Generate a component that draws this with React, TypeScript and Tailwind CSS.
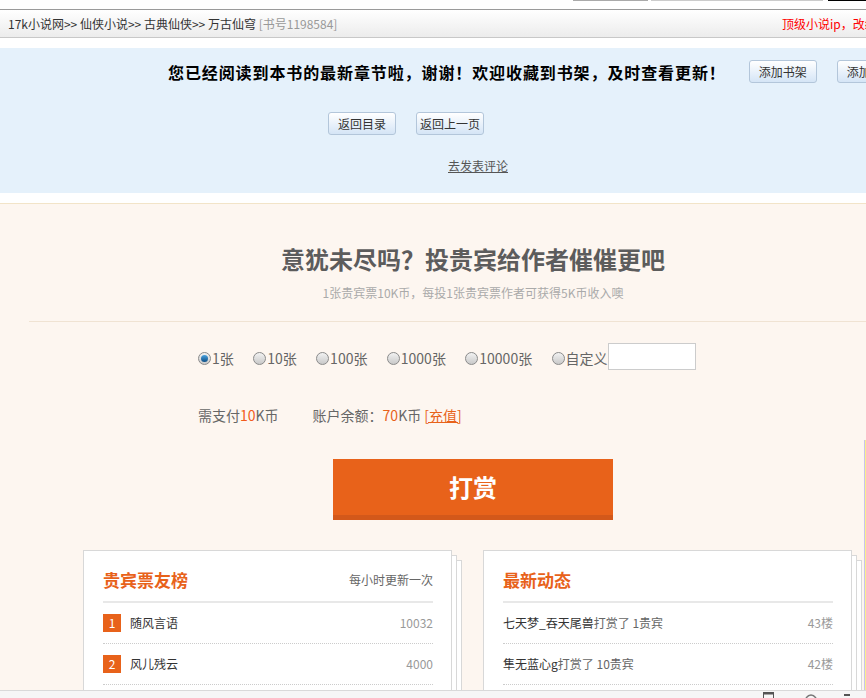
import React from 'react';

const FONT = '"Noto Sans CJK SC", "Noto Sans", "Liberation Sans", sans-serif';

const ranks = [
  { no: 1, name: '随风言语', value: '10032' },
  { no: 2, name: '风儿残云', value: '4000' },
  { no: 3, name: '墨染书香', value: '2000' },
];

const feeds = [
  { who: '七天梦_吞天尾兽', act: '打赏了 1贵宾', floor: '43楼' },
  { who: '隼无蓝心g', act: '打赏了 10贵宾', floor: '42楼' },
  { who: '书友20180512', act: '打赏了 1贵宾', floor: '41楼' },
];

const amounts = ['1张', '10张', '100张', '1000张', '10000张', '自定义'];

function BlueButton({ children }: { children: React.ReactNode }) {
  return (
    <button className="h-[23px] w-[68px] shrink-0 whitespace-nowrap rounded-[3px] border border-[#b3c6da] bg-gradient-to-b from-white to-[#d5e5f6] text-[12px] leading-none text-[#333]">
      {children}
    </button>
  );
}

function Radio({ checked }: { checked?: boolean }) {
  return (
    <span className="mr-[1px] flex h-[13px] w-[13px] shrink-0 items-center justify-center rounded-full border border-[#8a8a8a] bg-gradient-to-b from-[#f2f2f2] to-[#c9c9c9]">
      {checked && <span className="h-[7px] w-[7px] rounded-full bg-gradient-to-b from-[#4aa3e0] to-[#0d4f86]" />}
    </span>
  );
}

function Card({ title, extra, children }: { title: string; extra?: string; children: React.ReactNode }) {
  return (
    <div className="w-[369px] shrink-0 border border-[#d8d8d8] bg-white pl-[19px] pr-[18px] shadow-[5px_5px_0_-1px_#fff,5px_5px_0_0_#d8d8d8,10px_10px_0_-1px_#fff,10px_10px_0_0_#d8d8d8]">
      <div className="flex items-center justify-between border-b-2 border-[#e8e8e8] pt-[17px] pb-[9px]">
        <span className="text-[17px] font-bold leading-[24px] text-[#e8621a]">{title}</span>
        {extra && <span className="text-[12px] text-[#666]">{extra}</span>}
      </div>
      {children}
    </div>
  );
}

export default function App() {
  return (
    <div className="relative h-[698px] w-[866px] overflow-hidden bg-white" style={{ fontFamily: FONT }}>
      {/* top strip */}
      <div className="flex h-[9px] items-start">
        <div className="ml-[573px] h-[1px] w-[75px] bg-[#aaa]" />
        <div className="ml-[3px] h-[1px] w-[172px] bg-[#ccc]" />
        <div className="ml-[5px] h-[1px] flex-1 bg-black" />
      </div>

      {/* breadcrumb */}
      <div className="flex h-[29px] w-[1100px] items-center border-t border-b border-t-[#9a9a9a] border-b-[#c8c8c8] bg-gradient-to-b from-white to-[#ececec] text-[12px]">
        <span className="w-[782px] shrink-0 whitespace-nowrap pl-[8px] text-[#333]">
          17k小说网&gt;&gt; 仙侠小说&gt;&gt; 古典仙侠&gt;&gt; 万古仙穹 <span className="text-[#999]">[书号1198584]</span>
        </span>
        <span className="whitespace-nowrap text-[#f00]">顶级小说ip，改编网剧火热招商中</span>
      </div>

      {/* finished notice */}
      <div className="mt-[10px] h-[145px] w-[1100px] bg-[#e5f1fb] pt-[12px]">
        <div className="flex h-[23px] items-center pl-[168px]">
          <span className="whitespace-nowrap text-[16px] font-bold tracking-[0.9px] text-black">
            您已经阅读到本书的最新章节啦，谢谢！欢迎收藏到书架，及时查看更新！
          </span>
          <span className="ml-[23px] flex gap-[20px]">
            <BlueButton>添加书架</BlueButton>
            <BlueButton>添加书签</BlueButton>
          </span>
        </div>
        <div className="mt-[29px] flex gap-[20px] pl-[328px]">
          <BlueButton>返回目录</BlueButton>
          <BlueButton>返回上一页</BlueButton>
        </div>
        <div className="mt-[22px] pl-[448px] text-[12px] text-[#555] underline">去发表评论</div>
      </div>

      {/* reward area */}
      <div className="mt-[10px] h-[600px] border-t border-[#f2e4c8] bg-[#fdf6f0]">
        <div className="ml-[29px] w-[888px]">
          <div className="pt-[39px] text-center text-[24px] font-bold leading-[32px] text-[#5c5c5c]">
            意犹未尽吗？投贵宾给作者催催更吧
          </div>
          <div className="mt-[9px] text-center text-[12px] leading-[18px] text-[#aaa]">
            1张贵宾票10K币，每投1张贵宾票作者可获得5K币收入噢
          </div>
          <div className="mt-[19px] border-t border-[#f0e3d3]" />

          <div className="mt-[21px] flex h-[27px] items-center pl-[169px] text-[14px] text-[#666]">
            {amounts.map((a, i) => (
              <label key={a} className={`flex items-center pt-[3px] ${i < amounts.length - 1 ? 'mr-[19.4px]' : ''}`}>
                <Radio checked={i === 0} />
                {a}
              </label>
            ))}
            <input className="h-[27px] w-[88px] border border-[#ccc] bg-white" />
          </div>

          <div className="mt-[35px] flex h-[20px] items-center pl-[169px] text-[14px] text-[#666]">
            <span>
              需支付<span className="text-[#f25a1c]">10</span>K币
            </span>
            <span className="ml-[34px]">
              账户余额：<span className="text-[#e8621a]">70</span>K币{' '}
              <span className="text-[#e8621a] underline">[充值]</span>
            </span>
          </div>

          <div className="mt-[34px] flex justify-center">
            <button className="h-[61px] w-[280px] border-b-[5px] border-[#d3581a] bg-[#e8621a] text-[24px] font-bold text-white">
              打赏
            </button>
          </div>

          <div className="mt-[30px] flex gap-[31px] pl-[54px]">
            <Card title="贵宾票友榜" extra="每小时更新一次">
              {ranks.map((r) => (
                <div key={r.no} className="flex h-[41px] items-center border-b border-dotted border-[#ccc] text-[12px]">
                  <span className="flex h-[18px] w-[18px] items-center justify-center bg-[#e8621a] text-white">{r.no}</span>
                  <span className="ml-[9px] text-[#333]">{r.name}</span>
                  <span className="ml-auto text-[#999]">{r.value}</span>
                </div>
              ))}
            </Card>
            <Card title="最新动态">
              {feeds.map((f) => (
                <div key={f.floor} className="flex h-[41px] items-center border-b border-dotted border-[#ccc] text-[12px]">
                  <span className="text-[#333]">{f.who}</span>
                  <span className="text-[#666]">{f.act}</span>
                  <span className="ml-auto text-[#999]">{f.floor}</span>
                </div>
              ))}
            </Card>
          </div>
        </div>
      </div>

      {/* right edge stripe */}
      <div className="absolute right-0 top-[440px] h-[258px] w-[2px] border-l border-[#c9c2ee] bg-[#f7f08a]" />

      {/* bottom status bar */}
      <div className="absolute bottom-0 left-0 flex h-[8px] w-full items-start border-t border-[#d9d9d9] bg-[#f6f6f6]">
        <svg className="ml-[763px] mt-[1px]" width="11" height="7" viewBox="0 0 11 7">
          <rect x="0.5" y="0.5" width="10" height="7" fill="none" stroke="#555" />
          <rect x="0.5" y="0.5" width="10" height="2" fill="#555" />
        </svg>
        <svg className="ml-[31px] mt-[2px]" width="12" height="6" viewBox="0 0 12 6">
          <path d="M1 5 Q6 -1 11 5" fill="none" stroke="#777" strokeWidth="1.5" />
        </svg>
        <svg className="ml-[27px] mt-[3px]" width="6" height="5" viewBox="0 0 6 5">
          <rect x="0" y="0" width="6" height="2" fill="#555" />
        </svg>
      </div>
    </div>
  );
}
